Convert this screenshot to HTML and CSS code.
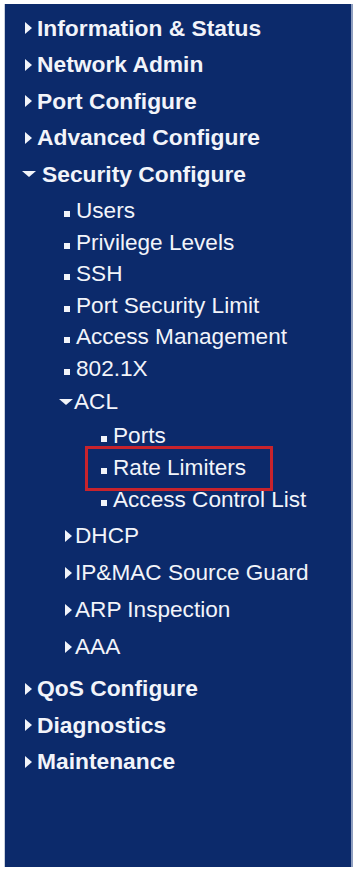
FILE: index.html
```html
<!DOCTYPE html>
<html>
<head>
<meta charset="utf-8">
<link rel="stylesheet" href="styles.css">
</head>
<body>
<nav class="panel">
  <ul class="menu">
    <li><div class="row top"><span class="tri-r"></span><span>Information &amp; Status</span></div></li>
    <li><div class="row top"><span class="tri-r"></span><span>Network Admin</span></div></li>
    <li><div class="row top"><span class="tri-r"></span><span>Port Configure</span></div></li>
    <li><div class="row top"><span class="tri-r"></span><span>Advanced Configure</span></div></li>
    <li>
      <div class="row top"><span class="tri-d"></span><span>Security Configure</span></div>
      <ul class="sub">
        <li><div class="row leaf"><span class="sq"></span><span>Users</span></div></li>
        <li><div class="row leaf"><span class="sq"></span><span>Privilege Levels</span></div></li>
        <li><div class="row leaf"><span class="sq"></span><span>SSH</span></div></li>
        <li><div class="row leaf"><span class="sq"></span><span>Port Security Limit</span></div></li>
        <li><div class="row leaf"><span class="sq"></span><span>Access Management</span></div></li>
        <li><div class="row leaf"><span class="sq"></span><span>802.1X</span></div></li>
        <li>
          <div class="row folder acl"><span class="tri-d small"></span><span>ACL</span></div>
          <ul class="sub3">
            <li><div class="row leaf3"><span class="sq"></span><span>Ports</span></div></li>
            <li><div class="row leaf3 selected"><span class="sq"></span><span>Rate Limiters</span></div></li>
            <li><div class="row leaf3"><span class="sq"></span><span>Access Control List</span></div></li>
          </ul>
        </li>
        <li><div class="row folder"><span class="tri-r"></span><span>DHCP</span></div></li>
        <li><div class="row folder"><span class="tri-r"></span><span>IP&amp;MAC Source Guard</span></div></li>
        <li><div class="row folder"><span class="tri-r"></span><span>ARP Inspection</span></div></li>
        <li><div class="row folder"><span class="tri-r"></span><span>AAA</span></div></li>
      </ul>
    </li>
    <li><div class="row top"><span class="tri-r"></span><span>QoS Configure</span></div></li>
    <li><div class="row top"><span class="tri-r"></span><span>Diagnostics</span></div></li>
    <li><div class="row top"><span class="tri-r"></span><span>Maintenance</span></div></li>
  </ul>
</nav>
</body>
</html>
```

FILE: styles.css
```css
html, body {
  margin: 0;
  padding: 0;
  background: #ffffff;
}
body {
  padding: 4px 4px 3px 4px;
  width: 357px;
  height: 870px;
  box-sizing: border-box;
}
.panel {
  height: 100%;
  box-sizing: border-box;
  background: #0c2a6b;
  border-left: 1px solid #c9d0dc;
  border-right: 2px solid #8f9fc0;
  padding: 6px 0 0 20px;
  font-family: "Liberation Sans", Arial, sans-serif;
  font-size: 22.6px;
  color: #f2f4fa;
}
ul {
  list-style: none;
  margin: 0;
  padding: 0;
}
.row {
  display: flex;
  align-items: center;
  white-space: nowrap;
}
.top {
  height: 36.5px;
  font-size: 22.8px;
  font-weight: bold;
}
.top .tri-r {
  margin-right: 5px;
}
.top .tri-d {
  margin-right: 6px;
}
.sub {
  padding: 3px 0 5px 39px;
}
.leaf {
  height: 31.5px;
}
.folder {
  height: 37px;
}
.folder .tri-r {
  margin-left: 1px;
  margin-right: 3px;
}
.folder.acl {
  height: 34px;
}
.sub3 {
  padding: 1px 0 2px 37px;
}
.leaf3 {
  height: 32px;
}
.selected {
  position: relative;
}
.selected::after {
  content: "";
  position: absolute;
  left: -16px;
  top: -6px;
  width: 188px;
  height: 45px;
  border: 3px solid #c8232c;
  box-sizing: border-box;
}
.tri-r {
  width: 0;
  height: 0;
  border-top: 6px solid transparent;
  border-bottom: 6px solid transparent;
  border-left: 7px solid #f2f4fa;
  margin-right: 3px;
}
.tri-d {
  width: 0;
  height: 0;
  border-left: 7px solid transparent;
  border-right: 7px solid transparent;
  border-top: 6px solid #f2f4fa;
  margin-right: 5px;
  margin-left: -3px;
}
.tri-d.small {
  margin-left: -5px;
  margin-right: 1px;
}
.sq {
  width: 6px;
  height: 6px;
  background: #f2f4fa;
  margin-right: 6px;
  position: relative;
  top: 3px;
}
```
